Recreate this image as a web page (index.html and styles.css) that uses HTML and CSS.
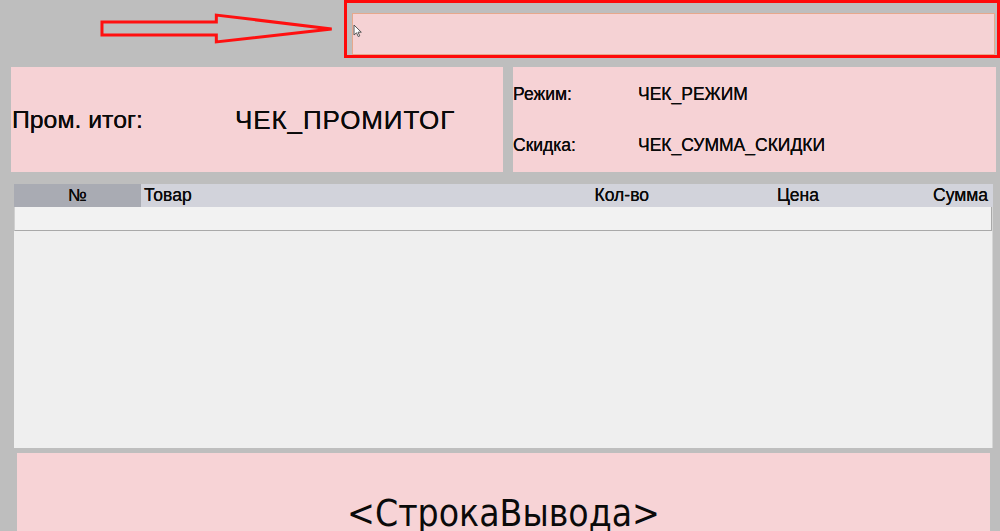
FILE: index.html
```html
<!DOCTYPE html>
<html lang="ru">
<head>
<meta charset="utf-8">
<title>Чек</title>
<link rel="stylesheet" href="styles.css">
</head>
<body>
<div class="screen">
  <div class="topbar">
    <svg class="arrow" width="240" height="34" viewBox="98 12 240 34">
      <path d="M102 22 L217 22 L217 15 L333 29 L217 42 L217 35 L102 35 Z" fill="none" stroke="#ff1010" stroke-width="3" stroke-linejoin="miter"/>
    </svg>
    <div class="highlight">
      <div class="field"></div>
      <svg class="cursor" width="10" height="14" viewBox="0 0 10 14">
        <path d="M1 1 L1 11 L3.5 8.8 L5.3 12.6 L6.8 11.9 L5 8.2 L8.3 8.2 Z" fill="#fff" stroke="#555" stroke-width="1"/>
      </svg>
    </div>
  </div>

  <div class="panels">
    <div class="panel total">
      <span class="total-label">Пром. итог:</span>
      <span class="total-value">ЧЕК_ПРОМИТОГ</span>
    </div>
    <div class="panel info">
      <div class="info-row"><span class="info-label">Режим:</span><span>ЧЕК_РЕЖИМ</span></div>
      <div class="info-row"><span class="info-label">Скидка:</span><span>ЧЕК_СУММА_СКИДКИ</span></div>
    </div>
  </div>

  <div class="table">
    <div class="thead">
      <div class="th num">№</div>
      <div class="th name">Товар</div>
      <div class="th right">Кол-во</div>
      <div class="th right">Цена</div>
      <div class="th right last">Сумма</div>
    </div>
    <div class="tbody">
      <div class="trow"></div>
    </div>
  </div>

  <div class="output">
    <span class="output-text">&lt;СтрокаВывода&gt;</span>
  </div>
</div>
</body>
</html>
```

FILE: styles.css
```css
html, body {
  margin: 0;
  padding: 0;
}
body {
  background: #bebebe;
  font-family: "Liberation Sans", Arial, sans-serif;
  color: #0a0a0a;
  overflow: hidden;
}
.screen {
  width: 1000px;
  height: 531px;
  overflow: hidden;
  display: flex;
  flex-direction: column;
}
.topbar {
  height: 58px;
  display: flex;
  align-items: flex-start;
}
.arrow {
  display: block;
  margin-left: 98px;
  margin-top: 12px;
}
.highlight {
  position: relative;
  margin-left: 7px;
  width: 647px;
  height: 42px;
  border: 3px solid #ff0a0a;
  padding: 10px 2px 0 5px;
}
.field {
  height: 40px;
  background: #f5d2d4;
  border: 1px solid #e6a88c;
}
.cursor {
  position: absolute;
  left: 6px;
  top: 21px;
}
.panels {
  margin-top: 9px;
  padding-left: 11px;
  display: flex;
  gap: 10px;
  height: 105px;
}
.panel {
  background: #f6d2d5;
}
.total {
  width: 492px;
  display: flex;
  align-items: center;
  padding-top: 1px;
  box-sizing: border-box;
  text-shadow: 0 0 0.4px #000;
}
.total-label {
  width: 223px;
  padding-left: 1px;
  font-size: 24.8px;
}
.total-value {
  font-size: 26px;
  letter-spacing: 0.9px;
}
.info {
  width: 483px;
  display: flex;
  flex-direction: column;
  font-size: 17.5px;
  padding-top: 18px;
  gap: 32px;
  box-sizing: border-box;
  text-shadow: 0 0 0.4px #000;
}
.info-row {
  display: flex;
  height: 19px;
  align-items: center;
}
.info-label {
  width: 125px;
}
.table {
  margin-top: 12px;
  margin-left: 14px;
  width: 979px;
  height: 264px;
  display: flex;
  flex-direction: column;
}
.thead {
  height: 23px;
  display: grid;
  grid-template-columns: 127px 338px 170px 170px 174px;
  background: #d2d3db;
  font-size: 17.5px;
  align-items: center;
  text-shadow: 0 0 0.5px #000;
}
.th {
  height: 23px;
  line-height: 23px;
  white-space: nowrap;
}
.num {
  background: #a9abb3;
  text-align: center;
}
.name {
  padding-left: 3px;
}
.right {
  text-align: right;
}
.last {
  padding-right: 5px;
}
.tbody {
  flex: 1;
  background: #efefef;
  border-right: 1px solid #d6d6d6;
}
.trow {
  height: 23px;
  background: #f2f2f2;
  border-bottom: 1px solid #a9a9a9;
  border-right: 1px solid #a9a9a9;
  border-left: 1px solid #d0d0d0;
}
.output {
  margin-top: 5px;
  margin-left: 17px;
  width: 973px;
  flex: 1;
  background: #f7d3d6;
  display: flex;
  justify-content: center;
  align-items: flex-end;
}
.output-text {
  font-family: "DejaVu Sans Condensed", "DejaVu Sans", sans-serif;
  font-stretch: condensed;
  font-size: 37px;
  line-height: 1;
  transform: translateY(1px);
}
```
